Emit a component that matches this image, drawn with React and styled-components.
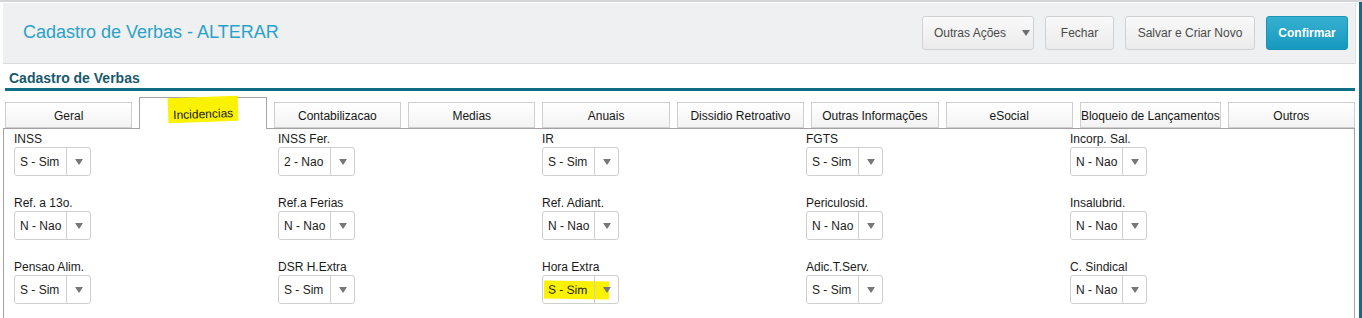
import React from "react";
import styled, { createGlobalStyle } from "styled-components";

const GlobalStyle = createGlobalStyle`
  html, body {
    margin: 0;
    padding: 0;
    background: #ffffff;
    font-family: "Liberation Sans", Arial, sans-serif;
  }
  #root {
    width: 1362px;
    height: 318px;
    overflow: hidden;
  }
`;

const Page = styled.div`
  display: flex;
  width: 1362px;
  height: 318px;
  border-top: 2px solid #d3d5d8;
  box-sizing: border-box;
`;

const Main = styled.div`
  flex: 1;
  padding: 1px 3px 0 3px;
  min-width: 0;
`;

const SideBar = styled.div`
  width: 3px;
  background: #0f6e85;
`;

const Header = styled.div`
  display: flex;
  align-items: center;
  justify-content: space-between;
  height: 61px;
  box-sizing: border-box;
  background: #eff0f1;
  border-bottom: 1px solid #d9dadc;
  border-right: 1px solid #e2e3e5;
  padding: 0 7px 0 20px;
`;

const Title = styled.h1`
  margin: 0;
  font-weight: normal;
  font-size: 18px;
  color: #2aa2c8;
  padding-bottom: 2px;
`;

const Actions = styled.div`
  display: flex;
  gap: 11px;
`;

const Button = styled.button`
  display: flex;
  align-items: center;
  justify-content: center;
  gap: 16px;
  height: 34px;
  width: ${p => p.w}px;
  box-sizing: border-box;
  padding: ${p => (p.menu ? "0 0 0 8px" : "0")};
  font-family: inherit;
  font-size: 12px;
  border-radius: 3px;
  cursor: pointer;
  color: ${p => (p.primary ? "#ffffff" : "#4a4a4a")};
  font-weight: ${p => (p.primary ? "bold" : "normal")};
  border: 1px solid ${p => (p.primary ? "#1a93b6" : "#d0d1d3")};
  background: ${p =>
    p.primary
      ? "linear-gradient(#36b0d0, #1799bf)"
      : "linear-gradient(#f9f9f9, #ebebeb)"};
`;

const Caret = styled.span`
  width: 0;
  height: 0;
  border-left: 4px solid transparent;
  border-right: 4px solid transparent;
  border-top: 6px solid #6d6e71;
`;

const Section = styled.div`
  padding: 6px 0 0 0;
`;

const SectionTitle = styled.div`
  font-size: 14px;
  font-weight: bold;
  color: #17596d;
  padding: 0 0 2px 4px;
  margin: 0 1px 0 2px;
  border-bottom: 3px solid #0f6e85;
`;

const Tabs = styled.div`
  display: flex;
  align-items: flex-end;
  gap: 7px;
  margin: 6px 1px 0 2px;
  position: relative;
  z-index: 1;
`;

const Tab = styled.div`
  flex: ${p => (p.w ? `0 0 ${p.w}px` : "1 1 0")};
  display: flex;
  align-items: center;
  justify-content: center;
  white-space: nowrap;
  box-sizing: border-box;
  height: ${p => (p.active ? 32 : 26)}px;
  margin-bottom: ${p => (p.active ? -1 : 0)}px;
  padding-top: ${p => (p.active ? 0 : 1)}px;
  font-size: 12px;
  color: #161616;
  border: 1px solid ${p => (p.active ? "#a4a4a4" : "#cfcfcf")};
  border-bottom: ${p => (p.active ? "none" : "1px solid #cfcfcf")};
  background: ${p =>
    p.active ? "#ffffff" : "linear-gradient(#ffffff, #f3f3f3)"};
`;

const Highlight = styled.span`
  background: #fbf200;
  white-space: nowrap;
  padding: ${p => p.pad || "0"};
  margin: ${p => p.m || "0"};
  transform: rotate(${p => p.rot || 0}deg);
  display: inline-block;
`;

const Panel = styled.div`
  border: 1px solid #a2a2a2;
  border-bottom: none;
  margin-right: 1px;
  height: 200px;
  box-sizing: border-box;
  padding: 3px 0 0 10px;
  display: grid;
  grid-template-columns: repeat(5, 264px);
  grid-auto-rows: 64px;
`;

const Field = styled.div`
  display: flex;
  flex-direction: column;
  align-items: flex-start;
`;

const Label = styled.label`
  font-size: 12px;
  color: #1a1a1a;
  line-height: 14px;
  margin-bottom: 1px;
`;

const Select = styled.div`
  display: flex;
  align-items: stretch;
  width: 77px;
  height: 29px;
  box-sizing: border-box;
  border: 1px solid #cfcfcf;
  border-radius: 3px;
  background: #ffffff;
`;

const Value = styled.div`
  flex: 1;
  display: flex;
  align-items: center;
  white-space: nowrap;
  padding-left: 5px;
  font-size: 12px;
  color: #1a1a1a;
`;

const Arrow = styled.div`
  width: 23px;
  display: flex;
  align-items: center;
  justify-content: center;
  border-left: 1px solid #cfcfcf;
  position: relative;
  z-index: 1;

  span {
    width: 0;
    height: 0;
    border-left: 4px solid transparent;
    border-right: 4px solid transparent;
    border-top: 6px solid #75777b;
  }
`;

const tabs = [
  "Geral",
  "Incidencias",
  "Contabilizacao",
  "Medias",
  "Anuais",
  "Dissidio Retroativo",
  "Outras Informações",
  "eSocial",
  "Bloqueio de Lançamentos",
  "Outros",
];

const fields = [
  ["INSS", "S - Sim"],
  ["INSS Fer.", "2 - Nao"],
  ["IR", "S - Sim"],
  ["FGTS", "S - Sim"],
  ["Incorp. Sal.", "N - Nao"],
  ["Ref. a 13o.", "N - Nao"],
  ["Ref.a Ferias", "N - Nao"],
  ["Ref. Adiant.", "N - Nao"],
  ["Periculosid.", "N - Nao"],
  ["Insalubrid.", "N - Nao"],
  ["Pensao Alim.", "S - Sim"],
  ["DSR H.Extra", "S - Sim"],
  ["Hora Extra", "S - Sim", true],
  ["Adic.T.Serv.", "S - Sim"],
  ["C. Sindical", "N - Nao"],
];

export default function App() {
  return (
    <>
      <GlobalStyle />
      <Page>
        <Main>
          <Header>
            <Title>Cadastro de Verbas - ALTERAR</Title>
            <Actions>
              <Button w={112} menu>
                Outras Ações <Caret />
              </Button>
              <Button w={69}>Fechar</Button>
              <Button w={130}>Salvar e Criar Novo</Button>
              <Button w={82} primary>
                Confirmar
              </Button>
            </Actions>
          </Header>
          <Section>
            <SectionTitle>Cadastro de Verbas</SectionTitle>
            <Tabs>
              {tabs.map(t => (
                <Tab
                  key={t}
                  active={t === "Incidencias"}
                  w={t === "Bloqueio de Lançamentos" ? 139 : undefined}
                >
                  {t === "Incidencias" ? (
                    <Highlight pad="10px 5px 1px" m="-9px 0 0 0" rot={-2}>
                      {t}
                    </Highlight>
                  ) : (
                    t
                  )}
                </Tab>
              ))}
            </Tabs>
            <Panel>
              {fields.map(([label, value, marked]) => (
                <Field key={label}>
                  <Label>{label}</Label>
                  <Select>
                    <Value>
                      {marked ? (
                        <Highlight pad="2px 22px 2px 4px" m="0 -20px 0 -4px" rot={1}>
                          {value}
                        </Highlight>
                      ) : (
                        value
                      )}
                    </Value>
                    <Arrow>
                      <span />
                    </Arrow>
                  </Select>
                </Field>
              ))}
            </Panel>
          </Section>
        </Main>
        <SideBar />
      </Page>
    </>
  );
}
